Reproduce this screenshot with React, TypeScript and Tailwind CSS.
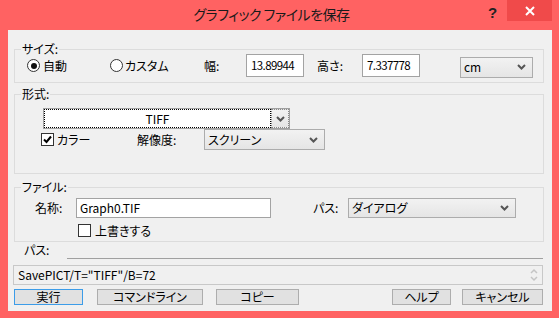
import React from 'react'

const jp = "font-['Noto_Sans_CJK_JP','Noto_Sans',sans-serif] [font-feature-settings:'palt']"

function Chevron() {
  return (
    <svg width="9" height="6" viewBox="0 0 9 6" className="shrink-0">
      <path d="M1 1 L4.5 4.5 L8 1" fill="none" stroke="#555" strokeWidth="2" />
    </svg>
  )
}

function Select({ text, w, h = 21 }: { text: string; w: string; h?: number }) {
  return (
    <div
      className={`${w} flex items-center justify-between border border-[#acacac] bg-gradient-to-b from-[#f2f2f2] to-[#e5e5e5] pl-[3px] pr-[6px]`}
      style={{ height: h }}
    >
      <span className="leading-none">{text}</span>
      <Chevron />
    </div>
  )
}

function Input({ value, w }: { value: string; w: string }) {
  return (
    <div className={`${w} h-[23px] flex items-center border border-[#a3a3a3] bg-white pl-[4px] leading-none text-[11.5px] tracking-[-0.6px]`}>
      {value}
    </div>
  )
}

function Radio({ checked }: { checked?: boolean }) {
  return (
    <span className="w-[13px] h-[13px] rounded-full border border-[#333] bg-white flex items-center justify-center shrink-0">
      {checked && <span className="w-[6px] h-[6px] rounded-full bg-[#111]" />}
    </span>
  )
}

function Check({ checked }: { checked?: boolean }) {
  return (
    <span className="w-[13px] h-[13px] border border-[#333] bg-white flex items-center justify-center shrink-0">
      {checked && (
        <svg width="9" height="9" viewBox="0 0 9 9">
          <path d="M1 4.5 L3.5 7 L8 1.5" fill="none" stroke="#000" strokeWidth="2" />
        </svg>
      )}
    </span>
  )
}

function Group({ label, className, children }: { label: string; className: string; children: React.ReactNode }) {
  return (
    <div className={`relative ml-[6px] w-[530px] border border-[#dcdcdc] ${className}`}>
      <span className="absolute -top-[9px] left-[6px] px-[1px] bg-[#f0f0f0] leading-[16px]">{label}</span>
      {children}
    </div>
  )
}

function Button({ text, w, focus }: { text: string; w: string; focus?: boolean }) {
  return (
    <div
      className={`${w} h-[16px] flex items-center justify-center border ${
        focus ? 'border-[#3c9ce8]' : 'border-[#adadad]'
      } bg-[#e1e1e1] leading-none`}
    >
      {text}
    </div>
  )
}

export default function App() {
  return (
    <div className={`w-[559px] h-[318px] bg-[#ff6262] flex flex-col text-[12px] text-black ${jp}`}>
      {/* title bar */}
      <div className="h-[30px] flex">
        <div className="flex-1 flex items-center justify-center pl-[55px] pb-[1px] text-[14px] tracking-[-0.5px] text-[#1a1a1a]">
          グラフィック ファイルを保存
        </div>
        <div className="w-[19px] pt-[2px] text-[15px] font-bold text-[#222] font-['Liberation_Sans',sans-serif]">?</div>
        <div className="w-[45px] h-[21px] mr-[7px] bg-[#f04a4a] flex items-center justify-center">
          <svg width="10" height="10" viewBox="0 0 10 10">
            <path d="M1 1 L9 9 M9 1 L1 9" stroke="#fff" strokeWidth="2" />
          </svg>
        </div>
      </div>

      {/* client */}
      <div className="ml-[8px] mr-[7px] h-[281px] bg-[#f0f0f0] flex flex-col">
        <Group label="サイズ:" className="mt-[19px] h-[34px] pt-[4px]">
          <div className="flex items-center h-[23px] pl-[12px]">
            <div className="w-[83px] flex items-center gap-[3px]">
              <Radio checked />
              <span>自動</span>
            </div>
            <div className="w-[94px] flex items-center gap-[2px]">
              <Radio />
              <span>カスタム</span>
            </div>
            <span className="w-[42px]">幅:</span>
            <Input value="13.89944" w="w-[58px]" />
            <span className="ml-[13px] w-[45px]">高さ:</span>
            <Input value="7.337778" w="w-[58px]" />
            <div className="ml-[40px] mt-[3px]">
              <Select text="cm" w="w-[73px]" />
            </div>
          </div>
        </Group>

        <Group label="形式:" className="mt-[11px] h-[80px] pt-[13px]">
          <div className="ml-[28px] w-[247px] h-[21px] flex border border-[#a0a0a0]">
            <div className="flex-1 bg-white border border-dotted border-black flex items-center justify-center leading-none">
              TIFF
            </div>
            <div className="w-[18px] border border-dotted border-[#888] bg-gradient-to-b from-[#f2f2f2] to-[#e5e5e5] flex items-center justify-center">
              <Chevron />
            </div>
          </div>
          <div className="flex items-center h-[21px] pl-[26px]">
            <div className="w-[96px] flex items-center gap-[3px]">
              <Check checked />
              <span>カラー</span>
            </div>
            <span className="w-[67px]">解像度:</span>
            <Select text="スクリーン" w="w-[121px]" />
          </div>
        </Group>

        <Group label="ファイル:" className="mt-[13px] h-[55px] pt-[10px]">
          <div className="flex items-center h-[20px] pl-[20px]">
            <span className="w-[41px]">名称:</span>
            <div className="w-[195px] h-[20px] flex items-center border border-[#a3a3a3] bg-white pl-[3px] leading-none">
              Graph0.TIF
            </div>
            <span className="ml-[42px] w-[35px]">パス:</span>
            <Select text="ダイアログ" w="w-[168px]" h={20} />
          </div>
          <div className="flex items-center gap-[4px] mt-[6px] pl-[63px]">
            <Check />
            <span className="leading-none">上書きする</span>
          </div>
        </Group>

        <div className="flex h-[17px]">
          <span className="w-[59px] pl-[16px] leading-[16px]">パス:</span>
          <div className="flex-1 self-end h-px bg-[#a0a0a0] mr-[9px]" />
        </div>

        <div className="mt-[6px] ml-[5px] w-[530px] h-[20px] flex items-center border border-[#c8c8c8] bg-[#f0f0f0] pl-[4px]">
          <span className="flex-1 leading-none">SavePICT/T="TIFF"/B=72</span>
          <svg width="10" height="14" viewBox="0 0 10 14" className="mr-[3px]">
            <path d="M2 5 L5 2 L8 5" fill="none" stroke="#c4c4c4" strokeWidth="1.5" />
            <path d="M2 9 L5 12 L8 9" fill="none" stroke="#c4c4c4" strokeWidth="1.5" />
          </svg>
        </div>

        <div className="mt-[4px] flex pl-[6px]">
          <Button text="実行" w="w-[69px]" focus />
          <div className="ml-[14px]">
            <Button text="コマンドライン" w="w-[106px]" />
          </div>
          <div className="ml-[13px]">
            <Button text="コピー" w="w-[83px]" />
          </div>
          <div className="ml-[93px]">
            <Button text="ヘルプ" w="w-[59px]" />
          </div>
          <div className="ml-[11px]">
            <Button text="キャンセル" w="w-[81px]" />
          </div>
        </div>
      </div>
    </div>
  )
}
